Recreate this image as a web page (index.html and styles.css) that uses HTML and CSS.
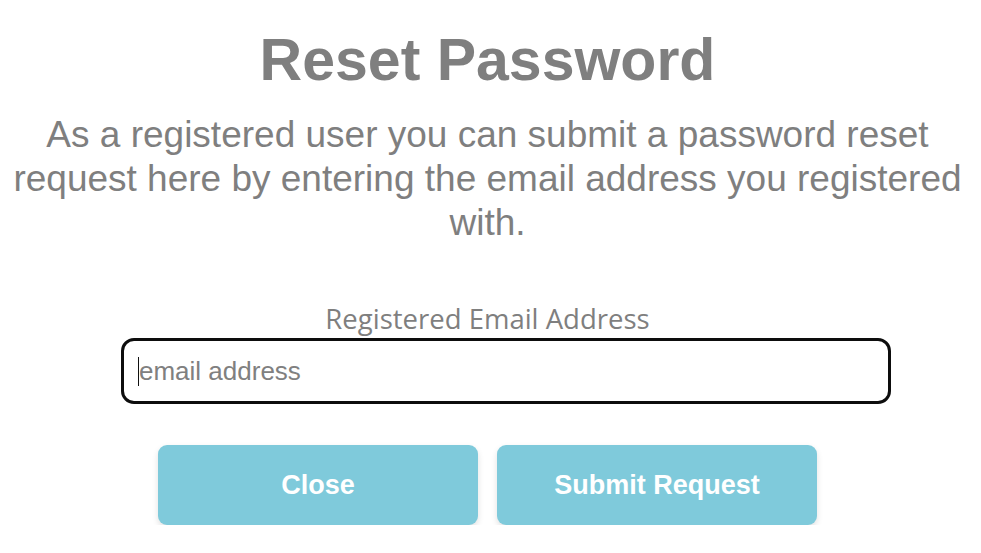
FILE: index.html
```html
<!DOCTYPE html>
<html>
<head>
<meta charset="utf-8">
<link rel="stylesheet" href="styles.css">
</head>
<body>
<div class="dialog">
  <h1 class="title">Reset Password</h1>
  <p class="intro">As a registered user you can submit a password reset request here by entering the email address you registered with.</p>
  <div class="field">
    <label class="label" for="email">Registered Email Address</label>
    <div class="input-row">
      <div class="input"><span class="caret"></span><span class="placeholder">email address</span></div>
    </div>
  </div>
  <div class="actions">
    <button class="btn">Close</button>
    <button class="btn">Submit Request</button>
  </div>
</div>
</body>
</html>
```
FILE: styles.css
```css
html, body {
  margin: 0;
  padding: 0;
  background: #ffffff;
}
.dialog {
  width: 975px;
  display: flex;
  flex-direction: column;
  align-items: center;
  font-family: "Liberation Sans", Arial, sans-serif;
  color: #7f7f7f;
}
.title {
  margin: 27px 0 0;
  font-size: 59px;
  line-height: 66px;
  font-weight: bold;
  color: #7f7f7f;
}
.intro {
  margin: 20px 0 0;
  font-size: 37px;
  line-height: 44px;
  text-align: center;
  color: #7f7f7f;
}
.field {
  align-self: stretch;
  display: flex;
  flex-direction: column;
  align-items: center;
  margin-top: 57px;
}
.label {
  font-family: "Open Sans", sans-serif;
  font-size: 27.5px;
  line-height: 34px;
  color: #7f7f7f;
}
.input-row {
  align-self: stretch;
  padding-left: 121px;
  margin-top: 2px;
}
.input {
  box-sizing: border-box;
  width: 770px;
  height: 66px;
  border: 3px solid #0d0d0d;
  border-radius: 13px;
  display: flex;
  align-items: center;
  padding-left: 14px;
}
.caret {
  width: 1px;
  height: 29px;
  background: #111;
}
.placeholder {
  font-family: "Liberation Sans", Arial, sans-serif;
  font-size: 26px;
  color: #808080;
}
.actions {
  display: flex;
  gap: 19px;
  margin-top: 41px;
}
.btn {
  width: 320px;
  height: 80px;
  border: none;
  border-radius: 9px;
  background: #7fcadb;
  color: #ffffff;
  font-family: "Liberation Sans", Arial, sans-serif;
  font-weight: bold;
  font-size: 27px;
  box-shadow: 0 3px 6px rgba(0, 0, 0, 0.12);
}
```
